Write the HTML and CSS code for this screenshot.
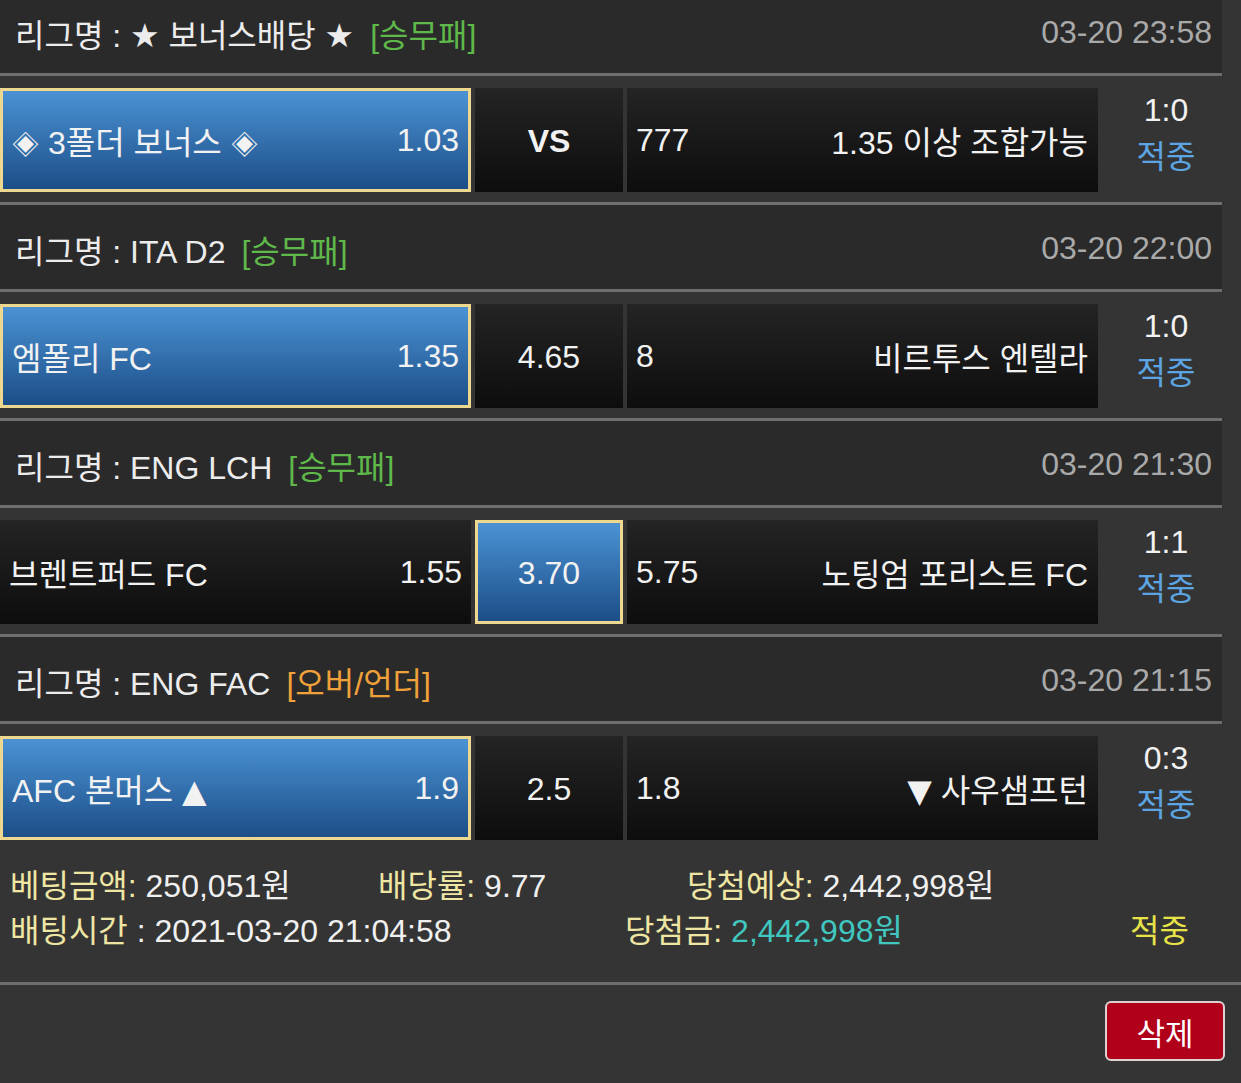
FILE: index.html
```html
<!DOCTYPE html>
<html lang="ko">
<head>
<meta charset="utf-8">
<link rel="stylesheet" href="styles.css">
</head>
<body>
<div class="wrap">
  <section class="game">
    <div class="league"><span class="lg-name">리그명 : <span class="star">★</span> 보너스배당 <span class="star">★</span><span class="type win">[승무패]</span></span><span class="time">03-20 23:58</span></div>
    <div class="match">
      <div class="cell home sel"><span class="team"><span class="dia">◈</span> 3폴더 보너스 <span class="dia">◈</span></span><span class="odd">1.03</span></div>
      <div class="cell draw"><span class="vs">VS</span></div>
      <div class="cell away"><span class="odd">777</span><span class="team">1.35 이상 조합가능</span></div>
      <div class="score"><span class="sc">1:0</span><span class="res">적중</span></div>
    </div>
  </section>
  <section class="game">
    <div class="league"><span class="lg-name">리그명 : ITA D2<span class="type win">[승무패]</span></span><span class="time">03-20 22:00</span></div>
    <div class="match">
      <div class="cell home sel"><span class="team">엠폴리 FC</span><span class="odd">1.35</span></div>
      <div class="cell draw"><span>4.65</span></div>
      <div class="cell away"><span class="odd">8</span><span class="team">비르투스 엔텔라</span></div>
      <div class="score"><span class="sc">1:0</span><span class="res">적중</span></div>
    </div>
  </section>
  <section class="game">
    <div class="league"><span class="lg-name">리그명 : ENG LCH<span class="type win">[승무패]</span></span><span class="time">03-20 21:30</span></div>
    <div class="match">
      <div class="cell home"><span class="team">브렌트퍼드 FC</span><span class="odd">1.55</span></div>
      <div class="cell draw sel"><span>3.70</span></div>
      <div class="cell away"><span class="odd">5.75</span><span class="team">노팅엄 포리스트 FC</span></div>
      <div class="score"><span class="sc">1:1</span><span class="res">적중</span></div>
    </div>
  </section>
  <section class="game last">
    <div class="league"><span class="lg-name">리그명 : ENG FAC<span class="type ou">[오버/언더]</span></span><span class="time">03-20 21:15</span></div>
    <div class="match">
      <div class="cell home sel"><span class="team">AFC 본머스 <span class="tri">▲</span></span><span class="odd">1.9</span></div>
      <div class="cell draw"><span>2.5</span></div>
      <div class="cell away"><span class="odd">1.8</span><span class="team"><span class="tri">▼</span> 사우샘프턴</span></div>
      <div class="score"><span class="sc">0:3</span><span class="res">적중</span></div>
    </div>
  </section>
  <div class="summary">
    <div class="sum-row r1">
      <span><span class="lbl">베팅금액:</span> 250,051원</span>
      <span><span class="lbl">배당률:</span> 9.77</span>
      <span><span class="lbl">당첨예상:</span> 2,442,998원</span>
    </div>
    <div class="sum-row r2">
      <span><span class="lbl">배팅시간</span> : 2021-03-20 21:04:58</span>
      <span><span class="lbl">당첨금:</span> <span class="win-amt">2,442,998원</span></span>
      <span class="hit">적중</span>
    </div>
  </div>
  <div class="actions">
    <button class="del">삭제</button>
  </div>
</div>
</body>
</html>
```
FILE: styles.css
```css
* { box-sizing: border-box; margin: 0; padding: 0; }
html, body { background: #343434; }
body {
  font-family: "Liberation Sans", "Noto Sans CJK KR", sans-serif;
  font-size: 32px;
  color: #f0f0f0;
  overflow: hidden;
}
.star { font-family: "DejaVu Sans", sans-serif; font-size: 33px; }
.tri { font-family: "DejaVu Sans", sans-serif; font-size: 32px; }
.dia { font-family: "Noto Sans CJK KR", sans-serif; font-size: 27px; }
.wrap { margin-top: -11px; }
.game { width: 1222px; }
.league {
  height: 87px;
  background: #2a2a2a;
  border-bottom: 3px solid #6e6e6e;
  display: flex;
  align-items: center;
  justify-content: space-between;
  padding: 3px 10px 0 15px;
  white-space: nowrap;
}
.lg-name { color: #ececec; }
.type { margin-left: 16px; }
.type.win { color: #5fb84a; }
.type.ou { color: #f0a13a; }
.time { color: #a9a9a9; }
.match {
  display: flex;
  gap: 4px;
  padding: 12px 0 10px;
  border-bottom: 3px solid #6e6e6e;
  height: 129px;
}
.game.last .match { border-bottom: none; height: 126px; }
.cell {
  flex: none;
  display: flex;
  align-items: center;
  justify-content: space-between;
  background: linear-gradient(to bottom, #242424, #0d0d0d);
  color: #f2f2f2;
  white-space: nowrap;
}
.home { width: 471px; padding: 0 9px; }
.draw { width: 148px; justify-content: center; padding-top: 3px; }
.away { width: 471px; padding: 0 10px 0 9px; }
.sel {
  background: linear-gradient(to bottom, #4b92d4, #1c4e87);
  border: 3px solid #eed78e;
}
.vs { font-weight: bold; }
.score {
  flex: none;
  width: 120px;
  padding-left: 8px;
  display: flex;
  flex-direction: column;
  align-items: center;
  line-height: 44px;
}
.sc { color: #f2f2f2; }
.res { color: #5ca4e2; margin-top: 3px; }
.summary {
  padding: 14px 0 28px;
  border-bottom: 3px solid #6e6e6e;
  line-height: 45px;
}
.sum-row { display: grid; padding-left: 10px; white-space: nowrap; }
.r1 { grid-template-columns: 368px 309px auto; }
.r2 { grid-template-columns: 615px 505px auto; }
.lbl { color: #efe6a4; }
.win-amt { color: #40c8c0; }
.hit { color: #e7e247; }
.actions {
  display: flex;
  justify-content: flex-end;
  padding: 16px 16px 0 0;
}
.del {
  width: 120px;
  height: 60px;
  background: #b1001a;
  border: 2px solid #dcd2d2;
  border-radius: 6px;
  color: #ffffff;
  font-family: "Liberation Sans", "Noto Sans CJK KR", sans-serif;
  font-size: 31px;
}
```
